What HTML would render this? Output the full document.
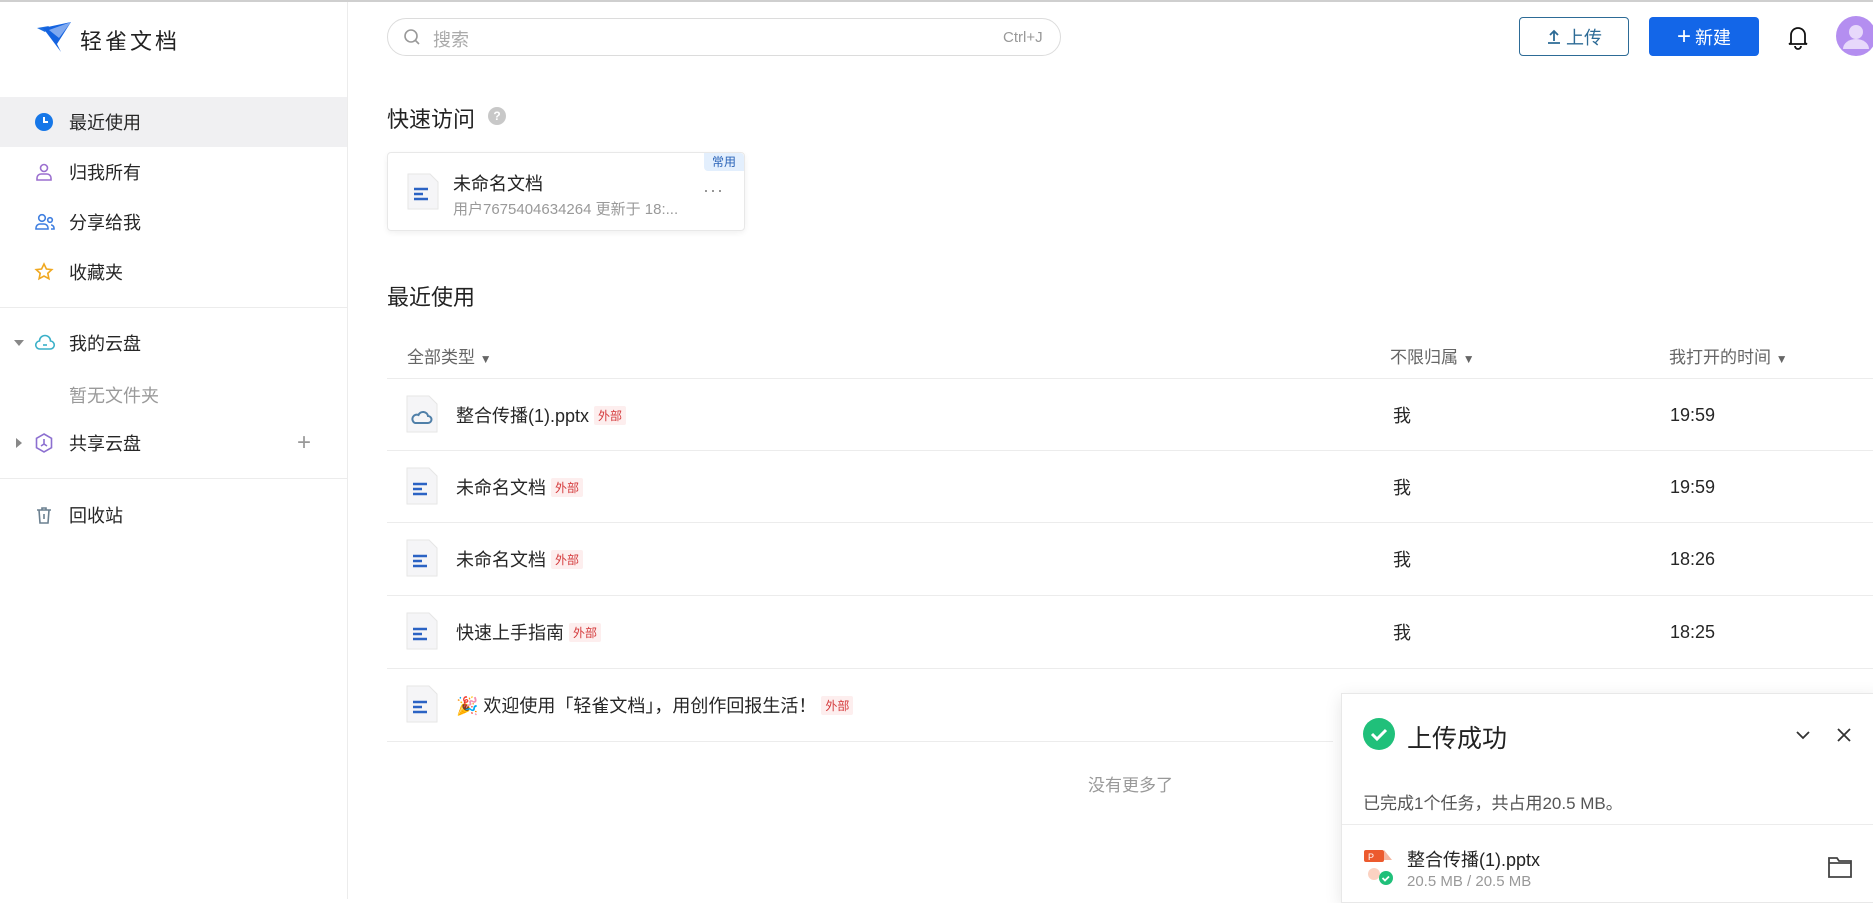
<!DOCTYPE html>
<html><head><meta charset="utf-8"><style>
*{margin:0;padding:0;box-sizing:border-box}
body{width:1873px;height:899px;overflow:hidden;background:#fff;font-family:"Liberation Sans","Noto Sans CJK SC",sans-serif;color:#262626;position:relative}
.a{position:absolute;white-space:nowrap}
.nav{position:absolute;left:0;width:348px;height:50px;display:flex;align-items:center;font-size:18px;color:#262626}
.nav svg{position:absolute;left:34px}
.nav span{position:absolute;left:69px}
.hl{position:absolute;left:387px;right:0;height:1px;background:#ececec}
.row{position:absolute;left:387px;right:0;height:72px;font-size:18px}
.row .ic{position:absolute;left:19px;top:17px}
.row .nm{position:absolute;left:69px;top:24px}
.tag{display:inline-block;font-size:12px;color:#d4393b;background:#fdeeee;padding:1px 4px;margin-left:5px;vertical-align:2px;border-radius:2px}
.row .me{position:absolute;left:1006px;top:24px}
.row .tm{position:absolute;left:1283px;top:27px}
</style></head><body>
<div class="a" style="left:0;top:0;width:1873px;height:2px;background:#cfcfcf"></div>
<div class="a" style="left:347px;top:2px;width:1px;height:897px;background:#ececec"></div>
<svg class="a" style="left:35px;top:20px" width="40" height="34" viewBox="0 0 40 34"><path d="M2 8 L14 6 L10 12Z" fill="#1f6fe0"/><path d="M8 8 L36 2 L22 24 L26 32 Z" fill="#1463e0"/><path d="M14 10 L36 2 L24 18Z" fill="#7fa9f0"/><path d="M18 18 L26 30 L22 24Z" fill="#9ab8f0"/></svg>
<div class="a" style="left:80px;top:24px;font-size:22px;letter-spacing:3px;color:#222">轻雀文档</div>
<div class="a" style="left:0;top:97px;width:347px;height:50px;background:#f0f0f2"></div>
<div class="nav" style="top:97px"><svg width="20" height="20" viewBox="0 0 20 20"><circle cx="10" cy="10" r="9" fill="#1677e8"/><path d="M10 5v5h4" stroke="#fff" stroke-width="2" fill="none"/></svg><span>最近使用</span></div>
<div class="nav" style="top:147px"><svg width="20" height="20" viewBox="0 0 20 20" fill="none" stroke="#9b6fcf" stroke-width="1.6"><circle cx="10" cy="6" r="3.5"/><path d="M3 18v-2a4 4 0 0 1 4-4h6a4 4 0 0 1 4 4v2z"/></svg><span>归我所有</span></div>
<div class="nav" style="top:197px"><svg width="22" height="20" viewBox="0 0 22 20" fill="none" stroke="#3f7fe0" stroke-width="1.6"><circle cx="8" cy="6" r="3.3"/><path d="M2 17v-1a4 4 0 0 1 4-4h4a4 4 0 0 1 4 4v1z"/><circle cx="16" cy="8" r="2.3"/><path d="M17 13a3 3 0 0 1 3 3v1h-3"/></svg><span>分享给我</span></div>
<div class="nav" style="top:247px"><svg width="20" height="20" viewBox="0 0 20 20" fill="none" stroke="#f0a820" stroke-width="1.6"><path d="M10 2l2.4 5 5.4.6-4 3.7 1.1 5.4L10 14l-4.9 2.7 1.1-5.4-4-3.7 5.4-.6z"/></svg><span>收藏夹</span></div>
<div class="a" style="left:0;top:307px;width:347px;height:1px;background:#ececec"></div>
<div class="a" style="left:14px;top:340px;width:0;height:0;border-left:5px solid transparent;border-right:5px solid transparent;border-top:6px solid #888"></div>
<div class="nav" style="top:318px"><svg width="22" height="20" viewBox="0 0 22 20" fill="none" stroke="#3ab0c8" stroke-width="1.6"><path d="M6 16h10a4 4 0 0 0 .5-8A5.5 5.5 0 0 0 5.5 8 4 4 0 0 0 6 16z"/><path d="M9 12h4"/></svg><span>我的云盘</span></div>
<div class="a" style="left:69px;top:382px;font-size:18px;color:#9a9a9a">暂无文件夹</div>
<div class="a" style="left:16px;top:438px;width:0;height:0;border-top:5px solid transparent;border-bottom:5px solid transparent;border-left:6px solid #888"></div>
<div class="nav" style="top:418px"><svg width="20" height="22" viewBox="0 0 20 22" fill="none" stroke="#8c6fd0" stroke-width="1.6"><path d="M10 2l7.5 4.3v9.4L10 20l-7.5-4.3V6.3z"/><path d="M10 7v5l-3 2M10 12l3 2"/></svg><span>共享云盘</span></div>
<div class="a" style="left:297px;top:431px;font-size:24px;color:#999;line-height:24px">+</div>
<div class="a" style="left:0;top:478px;width:347px;height:1px;background:#ececec"></div>
<div class="nav" style="top:490px"><svg width="20" height="20" viewBox="0 0 20 20" fill="none" stroke="#6b8090" stroke-width="1.6"><path d="M3 5h14M8 5V3h4v2M5 5l1 13h8l1-13M10 9v5"/></svg><span>回收站</span></div>
<div class="a" style="left:387px;top:18px;width:674px;height:38px;border:1px solid #dcdcdc;border-radius:19px"></div>
<svg class="a" style="left:403px;top:28px" width="18" height="18" viewBox="0 0 18 18" fill="none" stroke="#999" stroke-width="1.6"><circle cx="8" cy="8" r="6"/><path d="M12.5 12.5L16 16"/></svg>
<div class="a" style="left:433px;top:26px;font-size:18px;color:#aaa">搜索</div>
<div class="a" style="left:1003px;top:29px;font-size:15px;color:#999">Ctrl+J</div>
<div class="a" style="left:1519px;top:17px;width:110px;height:39px;border:1px solid #2d6b96;border-radius:4px;color:#2d6b96;font-size:18px;display:flex;align-items:center;justify-content:center"><svg width="16" height="16" viewBox="0 0 16 16" fill="none" stroke="#2d6b96" stroke-width="1.8" style="margin-right:4px"><path d="M8 12V3M4 6l4-4 4 4M2 14h12"/></svg>上传</div>
<div class="a" style="left:1649px;top:17px;width:110px;height:39px;background:#1366e8;border-radius:4px;color:#fff;font-size:18px;display:flex;align-items:center;justify-content:center"><span style="font-size:24px;font-weight:300;margin-right:4px;line-height:20px">+</span>新建</div>
<svg class="a" style="left:1786px;top:24px" width="24" height="26" viewBox="0 0 24 26" fill="none" stroke="#111" stroke-width="1.8"><path d="M5 19V11a7 7 0 0 1 14 0v8l2 1H3z"/><path d="M9 22a3 3 0 0 0 6 0"/></svg>
<svg class="a" style="left:1836px;top:16px" width="40" height="40" viewBox="0 0 40 40"><circle cx="20" cy="20" r="20" fill="#b48ef0"/><circle cx="20" cy="16" r="7" fill="#e7d8fb"/><path d="M7 33a13 10 0 0 1 26 0" fill="#e7d8fb"/></svg>
<div class="a" style="left:387px;top:102px;font-size:22px;color:#222">快速访问</div>
<div class="a" style="left:488px;top:107px;width:18px;height:18px;border-radius:50%;background:#c8c8c8;color:#fff;font-size:12px;font-weight:bold;text-align:center;line-height:18px">?</div>
<div class="a" style="left:387px;top:152px;width:358px;height:79px;border:1px solid #e8e8e8;border-radius:4px;box-shadow:0 2px 6px rgba(0,0,0,.06)"></div>
<div class="a" style="left:704px;top:153px;width:40px;height:18px;background:#e3effd;color:#2a63b8;font-size:12px;text-align:center;line-height:18px;border-radius:0 4px 0 4px">常用</div>
<svg class="a" style="left:407px;top:173px" width="32" height="37" viewBox="0 0 32 37"><path d="M1 1h22l8 8v27H1z" fill="#f5f5f7" stroke="#e6e6e6"/><path d="M7 16h14M7 21h9M7 26h14" stroke="#2b63c4" stroke-width="2.4"/></svg>
<div class="a" style="left:453px;top:170px;font-size:18px;color:#222">未命名文档</div>
<div class="a" style="left:453px;top:198px;font-size:15px;color:#999">用户7675404634264 更新于 18:...</div>
<div class="a" style="left:703px;top:180px;font-size:18px;color:#888;letter-spacing:1px">···</div>
<div class="a" style="left:387px;top:280px;font-size:22px;color:#222">最近使用</div>
<div class="a" style="left:407px;top:343px;font-size:17px;color:#666">全部类型 <span style="font-size:12px">▼</span></div>
<div class="a" style="left:1390px;top:343px;font-size:17px;color:#666">不限归属 <span style="font-size:12px">▼</span></div>
<div class="a" style="left:1669px;top:343px;font-size:17px;color:#666">我打开的时间 <span style="font-size:12px">▼</span></div>
<div class="hl" style="top:378px"></div>
<div class="row" style="top:378px"><svg class="ic" width="32" height="38" viewBox="0 0 32 38"><path d="M1 1h22l8 8v28H1z" fill="#f5f5f7" stroke="#e6e6e6"/><path d="M9 28h13a3.5 3.5 0 0 0 0-7 5 5 0 0 0-9.5-1A4 4 0 0 0 9 28z" fill="none" stroke="#4f7fa8" stroke-width="2"/></svg><div class="nm">整合传播(1).pptx<span class="tag">外部</span></div><div class="me">我</div><div class="tm">19:59</div></div>
<div class="hl" style="top:450px"></div>
<div class="row" style="top:450px"><svg class="ic" width="32" height="38" viewBox="0 0 32 38"><path d="M1 1h22l8 8v28H1z" fill="#f5f5f7" stroke="#e6e6e6"/><path d="M7 17h14M7 22h9M7 27h14" stroke="#2b63c4" stroke-width="2.4"/></svg><div class="nm">未命名文档<span class="tag">外部</span></div><div class="me">我</div><div class="tm">19:59</div></div>
<div class="hl" style="top:522px"></div>
<div class="row" style="top:522px"><svg class="ic" width="32" height="38" viewBox="0 0 32 38"><path d="M1 1h22l8 8v28H1z" fill="#f5f5f7" stroke="#e6e6e6"/><path d="M7 17h14M7 22h9M7 27h14" stroke="#2b63c4" stroke-width="2.4"/></svg><div class="nm">未命名文档<span class="tag">外部</span></div><div class="me">我</div><div class="tm">18:26</div></div>
<div class="hl" style="top:595px"></div>
<div class="row" style="top:595px"><svg class="ic" width="32" height="38" viewBox="0 0 32 38"><path d="M1 1h22l8 8v28H1z" fill="#f5f5f7" stroke="#e6e6e6"/><path d="M7 17h14M7 22h9M7 27h14" stroke="#2b63c4" stroke-width="2.4"/></svg><div class="nm">快速上手指南<span class="tag">外部</span></div><div class="me">我</div><div class="tm">18:25</div></div>
<div class="hl" style="top:668px"></div>
<div class="row" style="top:668px"><svg class="ic" width="32" height="38" viewBox="0 0 32 38"><path d="M1 1h22l8 8v28H1z" fill="#f5f5f7" stroke="#e6e6e6"/><path d="M7 17h14M7 22h9M7 27h14" stroke="#2b63c4" stroke-width="2.4"/></svg><div class="nm">🎉 欢迎使用「轻雀文档」，用创作回报生活！<span class="tag">外部</span></div></div>
<div class="hl" style="top:741px;right:540px"></div>
<div class="a" style="left:1088px;top:771px;font-size:17px;color:#999">没有更多了</div>
<div class="a" style="left:1341px;top:693px;width:540px;height:210px;background:#fff;border:1px solid #e8e8e8;box-shadow:0 4px 16px rgba(0,0,0,.1)"></div>
<svg class="a" style="left:1363px;top:718px" width="32" height="32" viewBox="0 0 32 32"><circle cx="16" cy="16" r="16" fill="#20c07a"/><path d="M9 16l5 5 9-9" stroke="#fff" stroke-width="3" fill="none"/></svg>
<div class="a" style="left:1407px;top:719px;font-size:25px;color:#222">上传成功</div>
<svg class="a" style="left:1795px;top:727px" width="16" height="16" viewBox="0 0 16 16" fill="none" stroke="#333" stroke-width="1.8"><path d="M2 5l6 6 6-6"/></svg>
<svg class="a" style="left:1836px;top:727px" width="16" height="16" viewBox="0 0 16 16" fill="none" stroke="#333" stroke-width="1.8"><path d="M2 2l12 12M14 2L2 14"/></svg>
<div class="a" style="left:1363px;top:789px;font-size:17px;color:#555">已完成1个任务，共占用20.5 MB。</div>
<div class="a" style="left:1342px;top:824px;width:531px;height:1px;background:#ececec"></div>
<svg class="a" style="left:1364px;top:850px" width="32" height="38" viewBox="0 0 32 38"><rect x="0" y="0" width="20" height="12" rx="2" fill="#ec5a2e"/><text x="4" y="10" font-size="9" fill="#fff" font-family="Liberation Sans">P</text><path d="M20 0l8 10H20z" fill="#f5b5a0"/><circle cx="10" cy="24" r="6" fill="#fbd2c2"/><circle cx="22" cy="28" r="7" fill="#20c07a"/><path d="M18.5 28l2.5 2.5 4-4" stroke="#fff" stroke-width="1.8" fill="none"/></svg>
<div class="a" style="left:1407px;top:846px;font-size:18px;color:#222">整合传播(1).pptx</div>
<div class="a" style="left:1407px;top:873px;font-size:15px;color:#999">20.5 MB / 20.5 MB</div>
<svg class="a" style="left:1828px;top:856px" width="24" height="22" viewBox="0 0 24 22" fill="none" stroke="#444" stroke-width="1.8"><path d="M1 2h8l2 3h12v16H1z"/><path d="M1 7h22"/></svg>
</body></html>
